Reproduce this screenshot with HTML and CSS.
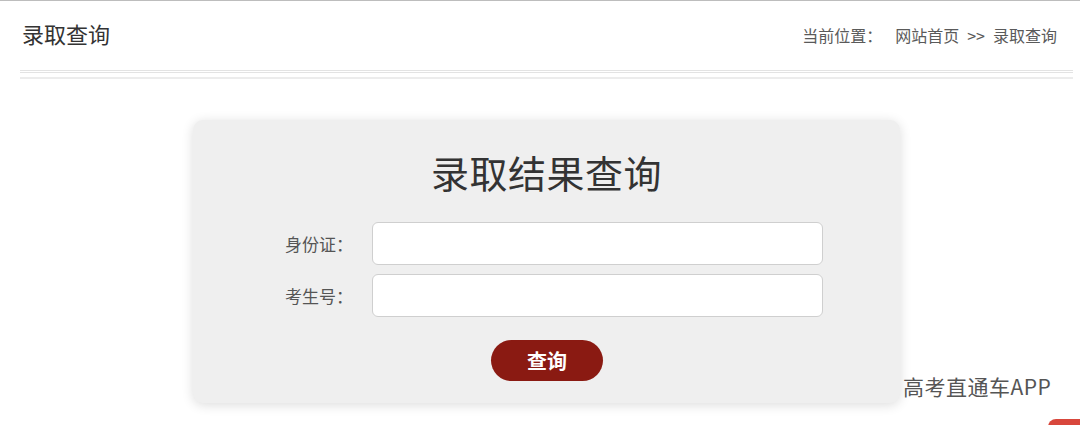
FILE: index.html
```html
<!DOCTYPE html>
<html lang="zh-CN">
<head>
    <meta charset="UTF-8">
    <meta name="viewport" content="width=device-width, initial-scale=1.0">
    <title>录取查询</title>
    <link rel="stylesheet" href="styles.css">
</head>
<body>
    <div class="page">
        <!-- 顶部标题与位置 -->
        <div class="top-bar">
            <h2 class="page-title">录取查询</h2>
            <div class="crumb">
                <span>当前位置：</span>
                <span class="crumb-home">网站首页</span>
                <span class="crumb-sep">&gt;&gt;</span>
                <span>录取查询</span>
            </div>
        </div>
        <div class="divider"></div>

        <!-- 查询表单 -->
        <div class="query-box">
            <h1 class="query-title">录取结果查询</h1>
            <form class="query-form" onsubmit="return false;">
                <label for="idCard">身份证：</label>
                <input type="text" id="idCard">
                <label for="examNo">考生号：</label>
                <input type="text" id="examNo">
                <div class="btn-row">
                    <button type="submit">查询</button>
                </div>
            </form>
        </div>
    </div>

    <div class="app-mark">高考直通车APP</div>
    <div class="corner-tab"></div>
</body>
</html>
```

FILE: styles.css
```css
body {
    margin: 0;
    font-family: "Noto Sans CJK SC", "Noto Sans", sans-serif;
    color: #333;
    background: #fff;
    border-top: 1px solid #bdbdbd;
    height: 424px;
    overflow: hidden;
    position: relative;
}

.page {
    margin: 0 7px 0 20px;
}

/* 顶部栏 */
.top-bar {
    display: flex;
    justify-content: space-between;
    align-items: center;
    height: 69px;
    padding: 0 16px 0 2px;
}

.page-title {
    margin: 0;
    font-size: 22px;
    font-weight: normal;
    color: #333;
    margin-top: -6px;
}

.crumb {
    display: flex;
    font-size: 16px;
    color: #5a5a5a;
    margin-top: -2px;
}

.crumb-home {
    margin-left: 13px;
}

.crumb-sep {
    margin: 0 8px;
}

.divider {
    height: 4px;
    border-top: 3px double #e3e3e3;
    border-bottom: 2px solid #ececec;
}

/* 查询框 */
.query-box {
    width: 707px;
    margin: 41px auto 0;
    box-sizing: border-box;
    background: #efefef;
    border-radius: 10px;
    box-shadow: 0 2px 12px rgba(0, 0, 0, 0.14);
    padding: 28px 0 22px;
}

.query-title {
    margin: 0;
    text-align: center;
    font-size: 38px;
    line-height: 48px;
    letter-spacing: 0.5px;
    font-weight: normal;
    color: #333;
}

.query-form {
    display: grid;
    grid-template-columns: 160px 451px;
    column-gap: 19px;
    row-gap: 9px;
    margin-top: 26px;
    align-items: center;
}

.query-form label {
    text-align: right;
    font-size: 17px;
    color: #555;
}

.query-form input {
    height: 43px;
    box-sizing: border-box;
    border: 1px solid #cfcfcf;
    border-radius: 6px;
    background: #fff;
    outline: none;
    font-size: 16px;
    padding: 0 10px;
}

.btn-row {
    grid-column: 1 / 3;
    display: flex;
    justify-content: center;
    padding-left: 78px;
    margin-top: 14px;
}

.btn-row button {
    width: 112px;
    height: 41px;
    border: none;
    border-radius: 21px;
    background: #8a1a12;
    color: #fff;
    font-family: inherit;
    font-size: 20px;
    font-weight: bold;
    cursor: pointer;
}

/* 右下角水印 */
.app-mark {
    position: absolute;
    left: 903px;
    top: 370px;
    font-size: 21px;
    letter-spacing: 0.5px;
    color: #555;
}

.corner-tab {
    position: absolute;
    left: 1048px;
    top: 418px;
    width: 40px;
    height: 20px;
    border-radius: 8px 0 0 0;
    background: #d8473c;
}
```
